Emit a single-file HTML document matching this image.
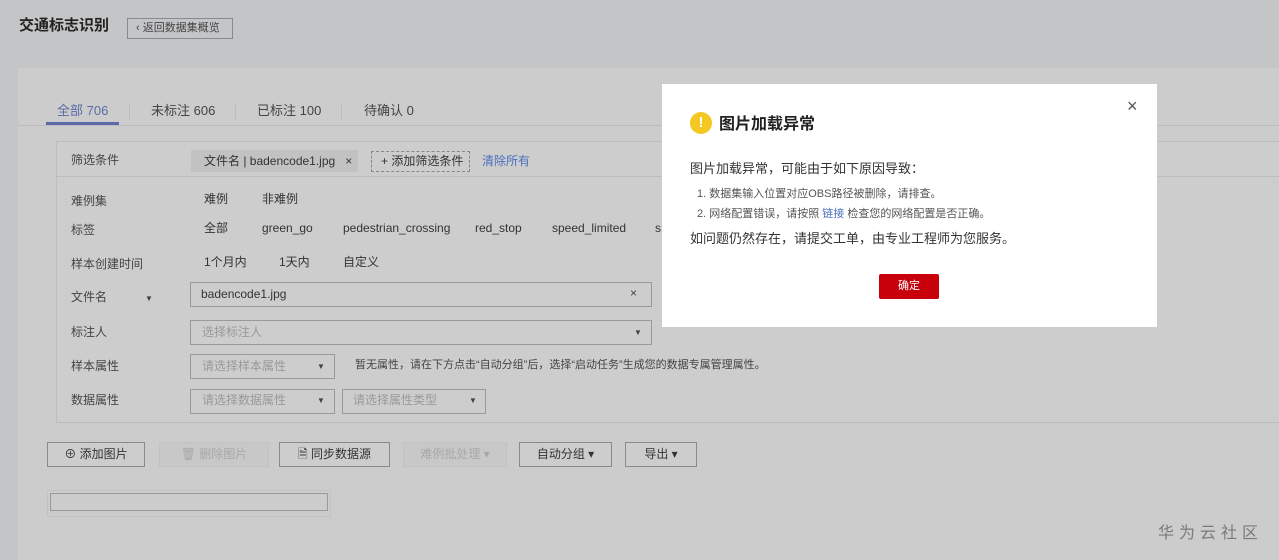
<!DOCTYPE html>
<html><head><meta charset="utf-8"><style>
*{margin:0;padding:0;box-sizing:border-box}
body{width:1279px;height:560px;overflow:hidden;background:#c4c5c7;font-family:"Liberation Sans","Noto Sans CJK SC",sans-serif;font-size:12px;color:#333;position:relative;line-height:1.2}
.a{position:absolute;white-space:nowrap}
.card{position:absolute;left:18px;top:68px;width:1261px;height:492px;background:#cccccc}
.box{position:absolute;left:56px;top:141px;width:1223px;height:282px;border:1px solid #bdbdbd;border-right:none;background:#cdcdcd}
.inp{position:absolute;border:1px solid #9a9a9a;background:#cdcdcd;height:25px}
.btn{position:absolute;top:442px;height:25px;border:1px solid #8a8a8a;background:#cdcdcd;text-align:center;line-height:23px;font-size:12px;color:#333}
.dis{border-color:#c2c2c2;background:#c8c8c8;color:#a8a8a8}
.lbl{color:#444}
.ph{color:#999}
.caret{font-size:8px;color:#444}
.modal{position:absolute;left:662px;top:84px;width:495px;height:243px;background:#fff}
</style></head><body>
<div class="a" style="left:19px;top:17px;font-size:15px;font-weight:bold;color:#222">交通标志识别</div>
<div class="a" style="left:127px;top:18px;width:106px;height:21px;border:1px solid #8a8a8a;font-size:11px;line-height:19px;padding-left:8px;color:#444">‹ 返回数据集概览</div>
<div class="card"></div>
<div class="a" style="left:18px;top:125px;width:1261px;height:1px;background:#bbb"></div>
<div class="a" style="left:57px;top:103px;font-size:13px;color:#5a6aa8">全部 706</div>
<div class="a" style="left:46px;top:122px;width:73px;height:3px;background:#5a6aa8"></div>
<div class="a" style="left:151px;top:103px;font-size:13px;color:#444">未标注 606</div>
<div class="a" style="left:257px;top:103px;font-size:13px;color:#444">已标注 100</div>
<div class="a" style="left:364px;top:103px;font-size:13px;color:#444">待确认 0</div>
<div class="a" style="left:129px;top:105px;width:1px;height:14px;background:#bbb"></div>
<div class="a" style="left:235px;top:105px;width:1px;height:14px;background:#bbb"></div>
<div class="a" style="left:341px;top:105px;width:1px;height:14px;background:#bbb"></div>
<div class="box"></div>
<div class="a" style="left:56px;top:176px;width:1223px;height:1px;background:#bdbdbd"></div>
<div class="a lbl" style="left:71px;top:153px">筛选条件</div>
<div class="a" style="left:191px;top:150px;width:167px;height:22px;background:#c2c2c2;line-height:22px;padding-left:13px;color:#333">文件名 | badencode1.jpg &nbsp;&nbsp;×</div>
<div class="a" style="left:371px;top:151px;width:99px;height:21px;border:1px dashed #888;line-height:19px;padding-left:9px;color:#333">+ 添加筛选条件</div>
<div class="a" style="left:482px;top:154px;color:#4a6fc0">清除所有</div>
<div class="a lbl" style="left:71px;top:194px">难例集</div>
<div class="a" style="left:204px;top:192px">难例</div>
<div class="a" style="left:262px;top:192px">非难例</div>
<div class="a lbl" style="left:71px;top:223px">标签</div>
<div class="a" style="left:204px;top:221px">全部</div>
<div class="a" style="left:262px;top:221px">green_go</div>
<div class="a" style="left:343px;top:221px">pedestrian_crossing</div>
<div class="a" style="left:475px;top:221px">red_stop</div>
<div class="a" style="left:552px;top:221px">speed_limited</div>
<div class="a" style="left:655px;top:221px">s</div>
<div class="a lbl" style="left:71px;top:257px">样本创建时间</div>
<div class="a" style="left:204px;top:255px">1个月内</div>
<div class="a" style="left:279px;top:255px">1天内</div>
<div class="a" style="left:343px;top:255px">自定义</div>
<div class="a lbl" style="left:71px;top:290px">文件名</div>
<div class="a caret" style="left:145px;top:294px">▼</div>
<div class="inp" style="left:190px;top:282px;width:462px"></div>
<div class="a" style="left:201px;top:287px;color:#333">badencode1.jpg</div>
<div class="a" style="left:630px;top:286px;color:#444">×</div>
<div class="a lbl" style="left:71px;top:325px">标注人</div>
<div class="inp" style="left:190px;top:320px;width:462px"></div>
<div class="a ph" style="left:202px;top:325px">选择标注人</div>
<div class="a caret" style="left:634px;top:328px">▼</div>
<div class="a lbl" style="left:71px;top:359px">样本属性</div>
<div class="inp" style="left:190px;top:354px;width:145px"></div>
<div class="a ph" style="left:202px;top:359px">请选择样本属性</div>
<div class="a caret" style="left:317px;top:362px">▼</div>
<div class="a" style="left:355px;top:359px;font-size:11px;color:#444">暂无属性，请在下方点击“自动分组”后，选择“启动任务”生成您的数据专属管理属性。</div>
<div class="a lbl" style="left:71px;top:393px">数据属性</div>
<div class="inp" style="left:190px;top:389px;width:145px"></div>
<div class="a ph" style="left:202px;top:393px">请选择数据属性</div>
<div class="a caret" style="left:317px;top:396px">▼</div>
<div class="inp" style="left:342px;top:389px;width:144px"></div>
<div class="a ph" style="left:353px;top:393px">请选择属性类型</div>
<div class="a caret" style="left:469px;top:396px">▼</div>
<div class="btn" style="left:47px;width:98px">⊕ 添加图片</div>
<div class="btn dis" style="left:159px;width:110px">🗑 删除图片</div>
<div class="btn" style="left:279px;width:111px">🗎 同步数据源</div>
<div class="btn dis" style="left:403px;width:104px">难例批处理 ▾</div>
<div class="btn" style="left:519px;width:93px">自动分组 ▾</div>
<div class="btn" style="left:625px;width:72px">导出 ▾</div>
<div class="a" style="left:47px;top:490px;width:284px;height:27px;border:1px solid #c2c2c2"></div>
<div class="a" style="left:50px;top:493px;width:278px;height:18px;border:1px solid #999"></div>
<div class="a" style="left:1158px;top:524px;font-size:16px;letter-spacing:5px;color:#7a7a7a">华为云社区</div>
<div class="modal">
<div class="a" style="left:28px;top:28px;width:22px;height:22px;border-radius:50%;background:#f5c723;color:#fff;font-weight:bold;font-size:15px;text-align:center;line-height:22px">!</div>
<div class="a" style="left:57px;top:31px;font-size:16px;font-weight:bold;color:#222">图片加载异常</div>
<div class="a" style="left:465px;top:12px;font-size:18px;color:#555">×</div>
<div class="a" style="left:28px;top:77px;font-size:13px;color:#333">图片加载异常，可能由于如下原因导致：</div>
<div class="a" style="left:35px;top:104px;font-size:11px;color:#555">1. 数据集输入位置对应OBS路径被删除，请排查。</div>
<div class="a" style="left:35px;top:124px;font-size:11px;color:#555">2. 网络配置错误，请按照 <span style="color:#4a6fc0">链接</span> 检查您的网络配置是否正确。</div>
<div class="a" style="left:28px;top:147px;font-size:13px;color:#333">如问题仍然存在，请提交工单，由专业工程师为您服务。</div>
<div class="a" style="left:217px;top:190px;width:60px;height:25px;background:#c7000b;color:#fff;text-align:center;line-height:25px;font-size:11px;border-radius:2px">确定</div>
</div>
</body></html>
